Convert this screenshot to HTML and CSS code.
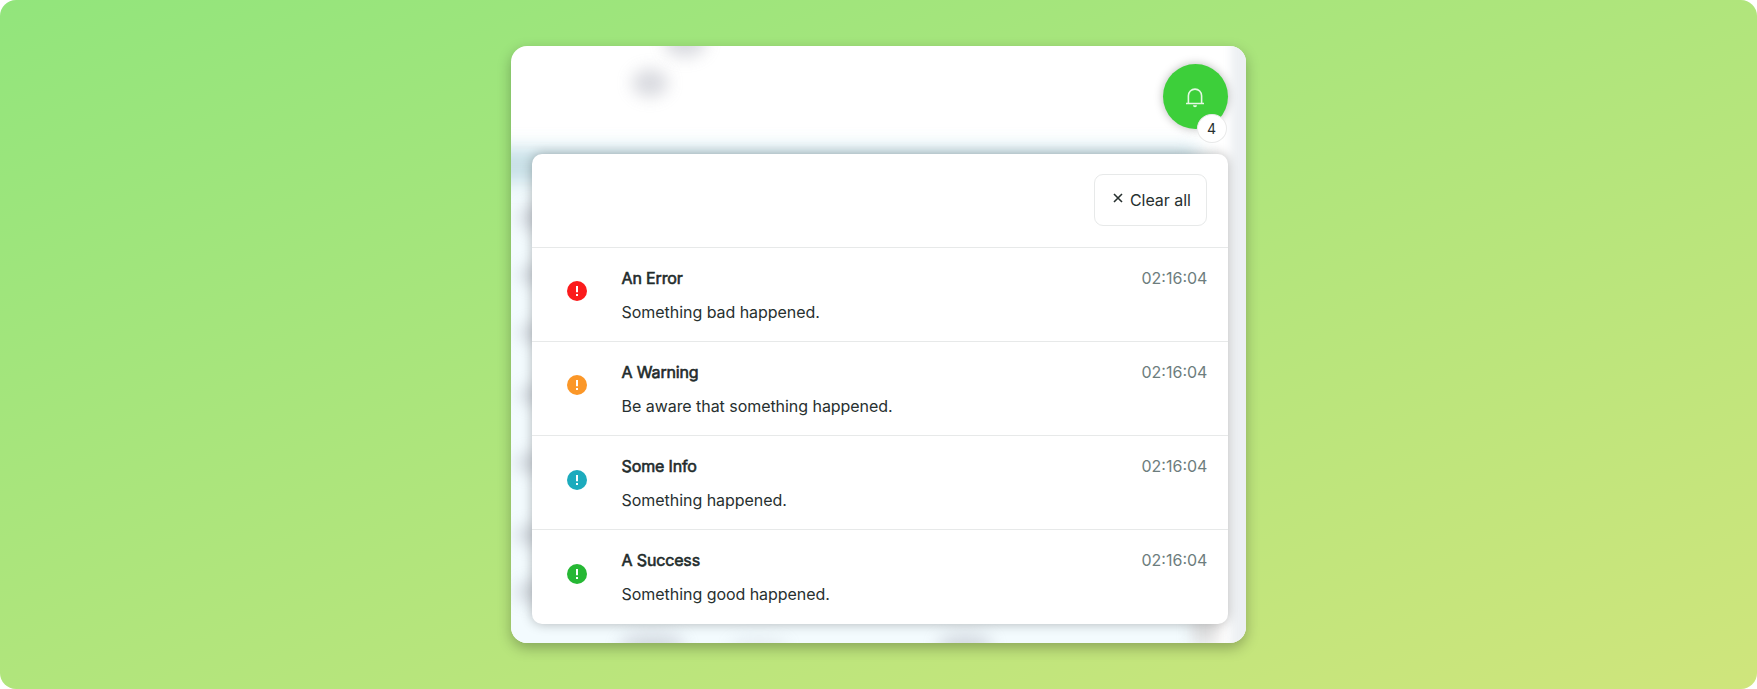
FILE: index.html
```html
<!DOCTYPE html>
<html lang="en">
<head>
<meta charset="utf-8">
<title>Notifications</title>
<link rel="stylesheet" href="styles.css">
</head>
<body>
<main class="stage">
  <section class="window">
    <div class="backdrop" aria-hidden="true">
      <i class="tint"></i><i class="band"></i><i class="edge"></i>
      <i class="smudge s1"></i><i class="smudge s2"></i>
      <i class="smudge l1"></i><i class="smudge l2"></i><i class="smudge l3"></i><i class="smudge l4"></i><i class="smudge l5"></i><i class="smudge l6"></i><i class="smudge l7"></i>
      <i class="smudge b1"></i><i class="smudge b2"></i><i class="smudge b3"></i><i class="smudge b4"></i>
    </div>
    <div class="toolbar">
      <button class="bell" aria-label="Notifications">
        <svg width="18" height="20" viewBox="0 0 18 20" fill="none" stroke="#e4f8e3" stroke-width="1.6"><path d="M2.4 15.3V7.7a6.6 6.6 0 0 1 13.2 0v7.6M0 15.5h18"/><path d="M7 17.2h4a2 2 0 0 1-4 0z" fill="#e4f8e3" stroke="none"/></svg>
        <span class="badge">4</span>
      </button>
    </div>
    <div class="panel">
      <header class="head">
        <button class="clear"><svg width="10" height="10" viewBox="0 0 10 10" stroke="#27302f" stroke-width="1.6"><path d="M1 1l8 8M9 1L1 9"/></svg><span>Clear all</span></button>
      </header>
      <article class="row error"><svg class="icon" viewBox="0 0 20 20"><circle cx="10" cy="10" r="10"/><path d="M9 5h2v6.3H9zM9 12.9h2v2H9z" fill="#fff"/></svg><div class="copy"><h2>An Error</h2><p>Something bad happened.</p></div><time>02:16:04</time></article>
      <article class="row warning"><svg class="icon" viewBox="0 0 20 20"><circle cx="10" cy="10" r="10"/><path d="M9 5h2v6.3H9zM9 12.9h2v2H9z" fill="#fff"/></svg><div class="copy"><h2>A Warning</h2><p>Be aware that something happened.</p></div><time>02:16:04</time></article>
      <article class="row info"><svg class="icon" viewBox="0 0 20 20"><circle cx="10" cy="10" r="10"/><path d="M9 5h2v6.3H9zM9 12.9h2v2H9z" fill="#fff"/></svg><div class="copy"><h2>Some Info</h2><p>Something happened.</p></div><time>02:16:04</time></article>
      <article class="row success"><svg class="icon" viewBox="0 0 20 20"><circle cx="10" cy="10" r="10"/><path d="M9 5h2v6.3H9zM9 12.9h2v2H9z" fill="#fff"/></svg><div class="copy"><h2>A Success</h2><p>Something good happened.</p></div><time>02:16:04</time></article>
    </div>
  </section>
</main>
</body>
</html>
```

FILE: styles.css
```css
* { box-sizing: border-box; }
body { margin: 0; background: #fff; font-family: Inter, sans-serif; font-size: 16px; color: #27302f; }
.stage { height: 689px; padding-top: 46px; border-radius: 16px; overflow: hidden; background: linear-gradient(to bottom right, #92e57c 0%, #cfe57c 100%); }
.window { position: relative; width: 735px; height: 597px; margin: 0 auto; padding: 18px 18.4px 20px 21px; border-radius: 16px; background: #fff; box-shadow: 0 5px 14px rgba(0,0,0,.28); }
.backdrop { position: absolute; inset: 0; overflow: hidden; border-radius: 16px; isolation: isolate; }
.backdrop i { position: absolute; }
.tint { left: -20px; right: 44px; top: 100px; bottom: -20px; background: #f3fbfe; filter: blur(10px); }
.band { left: -30px; width: 715px; top: 103px; height: 33px; background: #c8e0e7; filter: blur(9px); }
.edge { right: -10px; width: 25px; top: -20px; bottom: -20px; background: #edf0f3; filter: blur(4px); }
.smudge { border-radius: 50%; background: #9da0ae; opacity: .38; filter: blur(8px); }
.s1 { left: 121px; top: 23px; width: 36px; height: 28px; }
.s2 { left: 153px; top: -17px; width: 42px; height: 28px; }
.l1 { left: 8px; top: 159px; width: 30px; height: 26px; }
.l2 { left: 8px; top: 219px; width: 30px; height: 20px; }
.l3 { left: 8px; top: 277px; width: 30px; height: 20px; }
.l4 { left: 8px; top: 339px; width: 30px; height: 20px; }
.l5 { left: 5px; top: 406px; width: 30px; height: 22px; }
.l6 { left: 5px; top: 478px; width: 30px; height: 22px; }
.l7 { left: 5px; top: 535px; width: 30px; height: 22px; }
.b1 { left: 108px; top: 588px; width: 66px; height: 22px; }
.b2 { left: 218px; top: 593px; width: 60px; height: 14px; opacity: .2; }
.b3 { left: 426px; top: 588px; width: 56px; height: 22px; }
.b4 { left: 680px; top: 572px; width: 28px; height: 28px; background: #a9a4a4; }
.toolbar { display: flex; justify-content: flex-end; height: 90px; }
button { font: inherit; color: inherit; padding: 0; }
.bell { position: relative; display: flex; align-items: center; justify-content: center; width: 65px; height: 65px; border: 0; border-radius: 50%; background: #3dcf3a; box-shadow: 0 0 10px rgba(0,0,0,.28); }
.bell svg { margin-top: 2px; }
.badge { position: absolute; left: 34px; top: 50px; width: 30px; height: 29px; border: 1px solid #e9eaea; border-radius: 50%; background: #fff; font-size: 14px; line-height: 28px; text-align: center; }
.panel { position: relative; height: 469.6px; border-radius: 10px; background: #fff; box-shadow: 0 0 12px rgba(0,0,0,.28); }
.head { display: flex; justify-content: flex-end; height: 92.5px; padding: 20px 20.2px 0 0; }
.clear { display: flex; align-items: center; justify-content: center; gap: 7px; width: 113px; height: 52px; padding-left: 2px; border: 1px solid #e7e9e9; border-radius: 9px; background: #fff; }
.clear svg { margin-top: -5px; }
.clear span { letter-spacing: -.03px; }
.row { display: flex; height: 94.3px; border-top: 1px solid #e7e9e9; padding: 0 20.2px 0 35px; }
.icon { width: 20px; height: 20px; margin-top: 33.6px; }
.copy { flex: 1; padding: 17px 0 0 34.6px; }
h2, p, time { margin: 0; font-size: 16px; line-height: 26px; font-weight: 400; }
h2 { color: #222b2b; letter-spacing: -.16px; -webkit-text-stroke: .6px #222b2b; }
p { margin-top: 8px; letter-spacing: -.05px; }
time { padding-top: 17px; color: #6d7d7d; }
.error circle { fill: #fb1b1c; }
.warning circle { fill: #fb9728; }
.info circle { fill: #1cabbd; }
.success circle { fill: #26b834; }
```
